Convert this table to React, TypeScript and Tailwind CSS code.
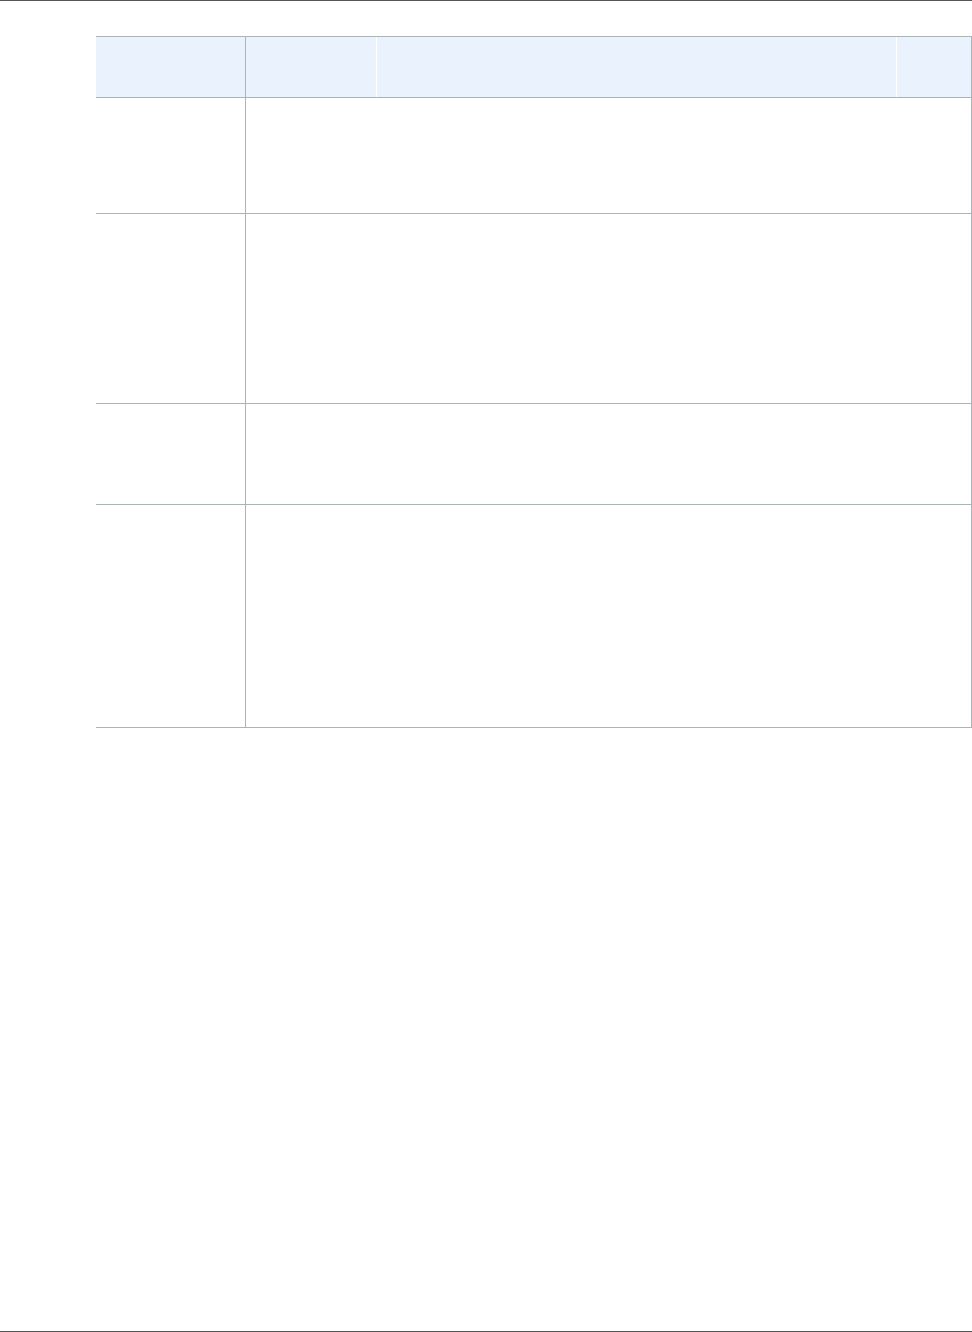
export default function App() {
  const rows = [116, 190, 101, 223];
  return (
    <div className="relative w-[972px] h-[1332px] bg-white flex flex-col" style={{ fontFamily: '"Liberation Sans", Arial, sans-serif' }}>
      <div className="h-px w-full bg-[#555555]" />
      <div className="pt-[35px] pl-[96px]">
        <div className="w-[876px]">
          <div className="grid grid-cols-[150px_131px_520px_75px] h-[62px] border-t border-b border-[#aab6b6] bg-[#eaf2fd]">
            <div className="border-r border-[#aab6b6]" />
            <div className="border-r border-white" />
            <div className="border-r border-white" />
            <div className="border-r border-[#aab6b6]" />
          </div>
          {rows.map((h, i) => (
            <div
              key={i}
              className="grid grid-cols-[150px_131px_520px_75px] border-b border-[#aab6b6]"
              style={{ height: h }}
            >
              <div className="border-r border-[#aab6b6]" />
              <div />
              <div />
              <div className="border-r border-[#aab6b6]" />
            </div>
          ))}
        </div>
      </div>
      <div className="flex-1" />
      <div className="h-px w-full bg-[#555555]" />
    </div>
  );
}
